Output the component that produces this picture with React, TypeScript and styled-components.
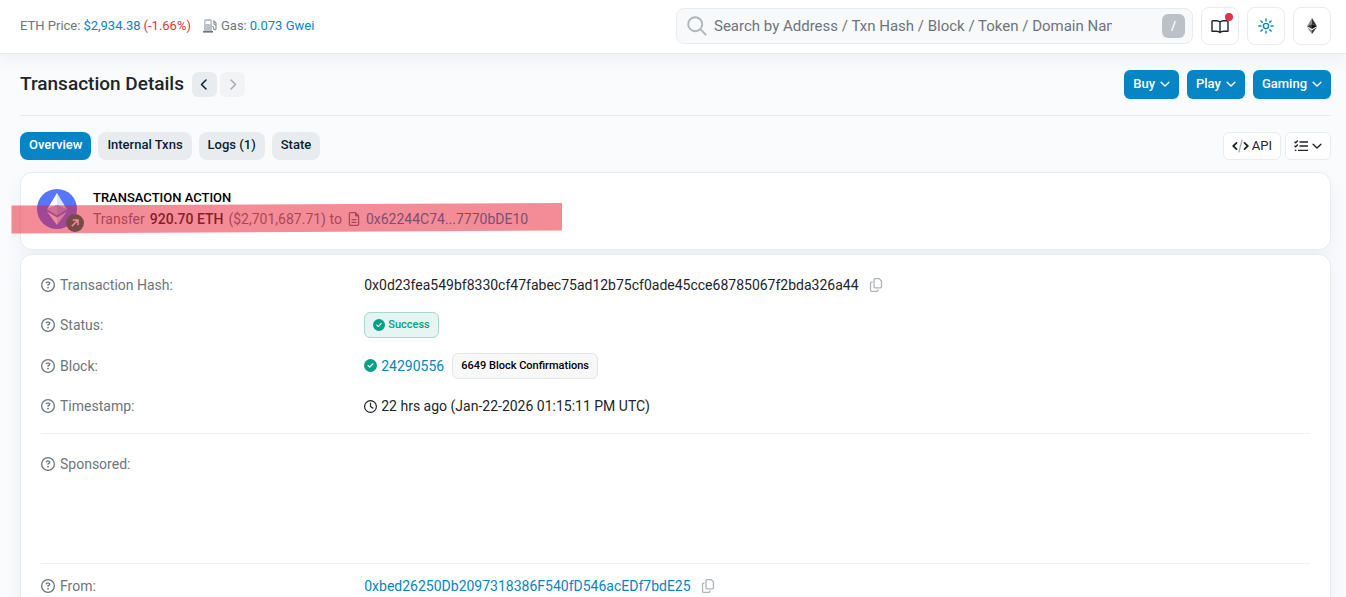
import React from "react";
import styled, { createGlobalStyle, css } from "styled-components";
import {
  FaRegCircleQuestion,
  FaCircleCheck,
  FaRegClock,
  FaRegFileLines,
  FaRegCopy,
} from "react-icons/fa6";

const GlobalStyle = createGlobalStyle`
  *, *::before, *::after { box-sizing: border-box; }
  html { scrollbar-width: none; }
  body {
    margin: 0;
    background: #fafbfd;
    color: #212529;
    font-family: Roboto, "Liberation Sans", sans-serif;
    font-size: 14px;
    line-height: 22px;
  }
  button, input { font: inherit; }
  a { color: #0784c3; text-decoration: none; }
  h1, h2, p, dl, dd, dt { margin: 0; font-weight: 400; }
  svg { display: block; flex: none; }
`;

const TopBar = styled.header`
  display: flex;
  align-items: center;
  justify-content: space-between;
  gap: 16px;
  padding: 7px 15px 8px 20px;
  background: #fff;
  border-bottom: 1px solid #e9ecef;
  box-shadow: 0 8px 12px rgba(189, 197, 209, 0.15);
`;

const Stats = styled.div`
  display: flex;
  align-items: center;
  gap: 12px;
  font-size: 13px;
  line-height: 20px;
  color: #6c757d;
`;

const Stat = styled.span`
  display: flex;
  align-items: center;
  gap: 3px;
  white-space: nowrap;
`;

const Drop = styled.span`
  color: #dc3545;
`;

const Tools = styled.div`
  display: flex;
  align-items: center;
  gap: 8px;
  flex: 0 1 655px;
`;

const SearchBox = styled.label`
  display: flex;
  align-items: center;
  flex: 1;
  min-width: 0;
  height: 36px;
  padding: 0 7px 0 10px;
  background: #f8f9fa;
  border: 1px solid #e9ecef;
  border-radius: 8px;
`;

const SearchInput = styled.input`
  flex: 1;
  min-width: 0;
  height: 32px;
  margin: 0 50px 0 7px;
  padding: 0;
  border: 0;
  outline: 0;
  background: transparent;
  font-size: 15px;
  color: #212529;
  &::placeholder { color: #6c757d; opacity: 1; }
`;

const Key = styled.kbd`
  width: 23px;
  height: 24px;
  border-radius: 6px;
  background: #bcc1c7;
  color: #fff;
  font-family: inherit;
  font-size: 13px;
  font-weight: 500;
  line-height: 24px;
  text-align: center;
`;

const SquareButton = styled.button`
  position: relative;
  display: flex;
  align-items: center;
  justify-content: center;
  flex: none;
  width: 38px;
  height: 38px;
  padding: 0;
  border: 1px solid #e9ecef;
  border-radius: 8px;
  background: #fff;
  color: #212529;
`;

const Dot = styled.span`
  position: absolute;
  top: 5px;
  right: 5px;
  width: 8px;
  height: 8px;
  border-radius: 50%;
  background: #dc3545;
`;

const Main = styled.main`
  padding: 0 15px 0 20px;
`;

const Row = styled.div`
  display: flex;
  align-items: center;
  gap: 8px;
`;

const TitleBar = styled(Row)`
  justify-content: space-between;
  padding: 16px 0;
  border-bottom: 1px solid #e9ecef;
`;

const Title = styled.h1`
  padding-bottom: 2px;
  font-size: 19px;
  line-height: 26px;
  font-weight: 500;
`;

const Pager = styled.div`
  display: flex;
  gap: 3px;
`;

const PagerButton = styled.button`
  display: flex;
  align-items: center;
  justify-content: center;
  width: 25px;
  height: 25px;
  padding: 0;
  border: 0;
  border-radius: 6px;
  background: #e9ecef;
  color: #081d35;
  &:disabled { color: #a4abb2; background: #f1f3f5; }
`;

const MenuButton = styled.button`
  display: flex;
  align-items: center;
  gap: 5px;
  height: 29px;
  padding: 0 9px 2px;
  border: 0;
  border-radius: 6px;
  background: #0784c3;
  color: #fff;
  font-size: 13px;
  font-weight: 500;
`;

const TabBar = styled(Row)`
  justify-content: space-between;
  padding: 16px 0 12px;
`;

const Tab = styled.a<{ $active?: boolean }>`
  padding: 3px 9px 5px;
  border-radius: 8px;
  font-size: 13px;
  line-height: 20px;
  font-weight: 500;
  background: #e9ecef;
  color: #081d35;
  ${(p) => p.$active && css`
    background: #0784c3;
    color: #fff;
  `}
`;

const Tabs = styled.nav`
  display: flex;
  gap: 7px;
`;

const ViewTools = styled.div`
  display: flex;
  gap: 4px;
`;

const LightButton = styled.button`
  display: flex;
  align-items: center;
  gap: 3px;
  height: 28px;
  padding: 0 8px;
  border: 1px solid #e9ecef;
  border-radius: 6px;
  background: #fff;
  color: #212529;
  font-size: 13px;
`;

const Card = styled.section`
  position: relative;
  background: #fff;
  border: 1px solid #e9ecef;
  border-radius: 12px;
  box-shadow: 0 8px 19px rgba(189, 197, 209, 0.2);
`;

const ActionCard = styled(Card)`
  display: flex;
  gap: 16px;
  margin-bottom: 4px;
  padding: 15px 16px 19px;
`;

const TokenBadge = styled.div`
  position: relative;
  width: 40px;
  height: 40px;
  margin-top: 1px;
`;

const Direction = styled.span`
  position: absolute;
  right: -7px;
  bottom: -3px;
  display: flex;
  align-items: center;
  justify-content: center;
  width: 18px;
  height: 18px;
  border-radius: 50%;
  background: #077b62;
`;

const ActionHeading = styled.h2`
  font-size: 13px;
  line-height: 20px;
  font-weight: 500;
  color: #000;
`;

const ActionText = styled.p`
  display: flex;
  align-items: center;
  gap: 5px;
  color: #6c757d;
  b { font-weight: 500; color: #212529; }
`;

const Marker = styled.svg`
  position: absolute;
  left: -10px;
  top: 30px;
  pointer-events: none;
`;

const Details = styled(Card)`
  padding: 10px 20px;
`;

const Group = styled.dl`
  padding-bottom: 7px;
  & + & {
    padding-top: 2px;
    border-top: 1px solid #eff1f3;
  }
`;

const Field = styled.div<{ $size?: "badge" | "tall" }>`
  display: grid;
  grid-template-columns: minmax(0, 1fr) minmax(0, 3fr);
  column-gap: 8px;
  align-items: center;
  min-height: 40px;
  ${(p) => p.$size === "badge" && css`min-height: 41px;`}
  ${(p) => p.$size === "tall" && css`
    align-items: start;
    min-height: 120px;
    padding: 17px 0;
  `}
`;

const Term = styled.dt`
  display: flex;
  align-items: center;
  gap: 5px;
  color: #6c757d;
`;

const Value = styled.dd`
  display: flex;
  align-items: center;
  gap: 4px;
  white-space: nowrap;
`;

const CopyButton = styled.button`
  margin-left: 6px;
  padding: 0;
  border: 0;
  background: none;
  color: #adb5bd;
`;

const Badge = styled.span<{ $success?: boolean }>`
  display: flex;
  align-items: center;
  gap: 3px;
  padding: 2px 8px;
  border: 1px solid #e3e4e5;
  border-radius: 6px;
  background: #f8f8f8;
  color: #000;
  font-size: 11px;
  line-height: 20px;
  font-weight: 500;
  margin-left: 4px;
  ${(p) => p.$success && css`
    margin-left: 0;
    border-color: #a3dccf;
    background: #e6f5f2;
    color: #00a186;
  `}
`;

const Check = styled(FaCircleCheck)`
  color: #00a186;
`;

const Chevron = ({ dir, size = 10 }: { dir: "left" | "right" | "down"; size?: number }) => {
  const d = { left: "M7 1 2.5 5.5 7 10", right: "M4 1 8.5 5.5 4 10", down: "M1.2 3.5 5.5 7.8 9.8 3.5" }[dir];
  return (
    <svg width={size} height={size} viewBox="0 0 11 11" fill="none" stroke="currentColor" strokeWidth="1.5" strokeLinecap="round" strokeLinejoin="round" aria-hidden="true">
      <path d={d} />
    </svg>
  );
};

const GasIcon = () => (
  <svg width="15" height="14" viewBox="0 0 15 14" aria-hidden="true">
    <path fill="#bcc2c8" fillRule="evenodd" d="M1 2A2 2 0 0 1 3 0h4a2 2 0 0 1 2 2v10H1zM2.6 2v3h4.8V2z" />
    <path fill="#6c757d" d="M0 12h10v1.6H0z" />
    <path fill="none" stroke="#8c949c" strokeWidth="1.2" d="M9 7.5h.6q1 0 1 1v1.2a1.2 1.2 0 0 0 2.4 0V4L10.200 1.500M11 2.500V5q0 .8 1.200.8h.8" />
  </svg>
);

const SearchIcon = () => (
  <svg width="20" height="20" viewBox="0 0 20 20" fill="none" stroke="#adb5bd" strokeWidth="1.9" aria-hidden="true">
    <circle cx="8.2" cy="8.2" r="7" />
    <path d="m13.2 13.2 6 6" />
  </svg>
);

const BookIcon = () => (
  <svg width="18" height="15" viewBox="0 0 18 15" fill="none" stroke="currentColor" strokeWidth="1.4" strokeLinejoin="round" aria-hidden="true">
    <path d="M9 3Q7.800 1.700 5.500 1.700H2Q1 1.700 1 2.700V12.200H5.500Q8 12.200 9 13.700 10 12.200 12.500 12.200H17V2.700Q17 1.700 16 1.700H12.500Q10.200 1.700 9 3zV13.500" />
  </svg>
);

const SunIcon = () => (
  <svg width="16" height="16" viewBox="0 0 16 16" fill="none" stroke="#0784c3" strokeWidth="1.4" strokeLinecap="round" aria-hidden="true">
    <circle cx="8" cy="8" r="2.6" />
    <path d="M8 .9v2M8 13.1v2M.9 8h2M13.1 8h2M2.9 2.9l1.4 1.4M11.7 11.7l1.4 1.4M2.9 13.1l1.4-1.4M11.7 4.3l1.4-1.4" />
  </svg>
);

const EtherIcon = () => (
  <svg width="10" height="16" viewBox="0 0 10 16" aria-hidden="true">
    <path fill="#8c8c8c" d="M5 0 0 8.2l5-2.3z" />
    <path fill="#343434" d="m5 0 5 8.2-5-2.3z" />
    <path fill="#3c3c3b" d="M0 8.2 5 5.9v5.2z" />
    <path fill="#141414" d="M10 8.2 5 5.9v5.2z" />
    <path fill="#8c8c8c" d="m0 9.2 5 3v3.8z" />
    <path fill="#3c3c3b" d="m10 9.2-5 3v3.8z" />
  </svg>
);

const EthToken = () => (
  <svg width="40" height="40" viewBox="0 0 40 40" aria-hidden="true">
    <circle cx="20" cy="20" r="20" fill="#5677fc" />
    <path fill="#fff" d="M20 4 10 20.5l10-4.5z" />
    <path fill="#dde4ff" d="m20 4 10 16.5L20 16z" />
    <path fill="#bbc8fe" d="m10 20.5 10-4.5v10.5z" />
    <path fill="#9aadfd" d="m30 20.5-10-4.5v10.5z" />
    <path fill="#fff" d="m10 22.5 10 6V36z" />
    <path fill="#ccd6fe" d="m30 22.5-10 6V36z" />
  </svg>
);

const ArrowIcon = () => (
  <svg width="8" height="8" viewBox="0 0 8 8" fill="none" stroke="#fff" strokeWidth="1.5" aria-hidden="true">
    <path d="M.8 7.2 7 1M1.8 1H7v5.2" />
  </svg>
);

const CodeIcon = () => (
  <svg width="17" height="14" viewBox="0 0 17 14" fill="none" strokeWidth="1.8" strokeLinecap="round" strokeLinejoin="round" aria-hidden="true">
    <path stroke="#212529" d="M4.5 3.900 1.300 7l3.200 3.100M12.500 3.900 15.700 7l-3.200 3.100" />
    <path stroke="#a6a8a9" strokeWidth="1.3" d="M10 1.2 7 12.8" />
  </svg>
);

const ListIcon = () => (
  <svg width="15" height="12" viewBox="0 0 15 12" fill="none" stroke="currentColor" strokeWidth="1.3" aria-hidden="true">
    <path d="M5.5 2H14M5.5 6H14M4 10.3h10M.5 1.8l1.200 1L3.800.5M.5 5.800l1.200 1 2.100-2.300M.8 10.300h1.600" />
  </svg>
);

const Label = ({ children }: { children: React.ReactNode }) => (
  <Term>
    <FaRegCircleQuestion size={14} />
    {children}
  </Term>
);

const Copy = ({ label }: { label: string }) => (
  <CopyButton aria-label={label}>
    <FaRegCopy size={14} />
  </CopyButton>
);

export default function App() {
  return (
    <>
      <GlobalStyle />
      <TopBar>
        <Stats>
          <Stat>
            <span>ETH Price:</span>
            <a href="#price">$2,934.38</a>
            <Drop>(-1.66%)</Drop>
          </Stat>
          <Stat>
            <GasIcon />
            <span>Gas:</span>
            <a href="#gas">0.073 Gwei</a>
          </Stat>
        </Stats>
        <Tools>
          <SearchBox>
            <SearchIcon />
            <SearchInput aria-label="Search" placeholder="Search by Address / Txn Hash / Block / Token / Domain Name" />
            <Key>/</Key>
          </SearchBox>
          <SquareButton aria-label="Guides">
            <BookIcon />
            <Dot />
          </SquareButton>
          <SquareButton aria-label="Theme">
            <SunIcon />
          </SquareButton>
          <SquareButton aria-label="Network">
            <EtherIcon />
          </SquareButton>
        </Tools>
      </TopBar>
      <Main>
        <TitleBar>
          <Row>
            <Title>Transaction Details</Title>
            <Pager>
              <PagerButton aria-label="Previous"><Chevron dir="left" size={11} /></PagerButton>
              <PagerButton aria-label="Next" disabled><Chevron dir="right" size={11} /></PagerButton>
            </Pager>
          </Row>
          <Row>
            {["Buy", "Play", "Gaming"].map((name) => (
              <MenuButton key={name}>
                {name}
                <Chevron dir="down" />
              </MenuButton>
            ))}
          </Row>
        </TitleBar>
        <TabBar>
          <Tabs>
            <Tab href="#overview" $active>Overview</Tab>
            <Tab href="#internal">Internal Txns</Tab>
            <Tab href="#logs">Logs (1)</Tab>
            <Tab href="#state">State</Tab>
          </Tabs>
          <ViewTools>
            <LightButton><CodeIcon />API</LightButton>
            <LightButton aria-label="View options"><ListIcon /><Chevron dir="down" /></LightButton>
          </ViewTools>
        </TabBar>
        <ActionCard>
          <TokenBadge>
            <EthToken />
            <Direction><ArrowIcon /></Direction>
          </TokenBadge>
          <div>
            <ActionHeading>TRANSACTION ACTION</ActionHeading>
            <ActionText>
              <span>Transfer</span>
              <b>920.70 ETH</b>
              <span>($2,701,687.71) to</span>
              <FaRegFileLines size={14} />
              <a href="#recipient">0x62244C74...7770bDE10</a>
            </ActionText>
          </div>
          <Marker width="552" height="32" viewBox="0 0 552 32" aria-hidden="true">
            <path fill="#e7192d" fillOpacity="0.5" d="M.5 2.5 551 0v27.5L.5 30.5z" />
          </Marker>
        </ActionCard>
        <Details>
          <Group>
            <Field>
              <Label>Transaction Hash:</Label>
              <Value>
                0x0d23fea549bf8330cf47fabec75ad12b75cf0ade45cce68785067f2bda326a44
                <Copy label="Copy hash" />
              </Value>
            </Field>
            <Field>
              <Label>Status:</Label>
              <Value><Badge $success><Check size={12} />Success</Badge></Value>
            </Field>
            <Field $size="badge">
              <Label>Block:</Label>
              <Value>
                <Check size={13} />
                <a href="#block">24290556</a>
                <Badge>6649 Block Confirmations</Badge>
              </Value>
            </Field>
            <Field>
              <Label>Timestamp:</Label>
              <Value><FaRegClock size={13} />22 hrs ago (Jan-22-2026 01:15:11 PM UTC)</Value>
            </Field>
          </Group>
          <Group>
            <Field $size="tall">
              <Label>Sponsored:</Label>
              <Value />
            </Field>
          </Group>
          <Group>
            <Field>
              <Label>From:</Label>
              <Value>
                <a href="#from">0xbed26250Db2097318386F540fD546acEDf7bdE25</a>
                <Copy label="Copy sender" />
              </Value>
            </Field>
          </Group>
        </Details>
      </Main>
    </>
  );
}
